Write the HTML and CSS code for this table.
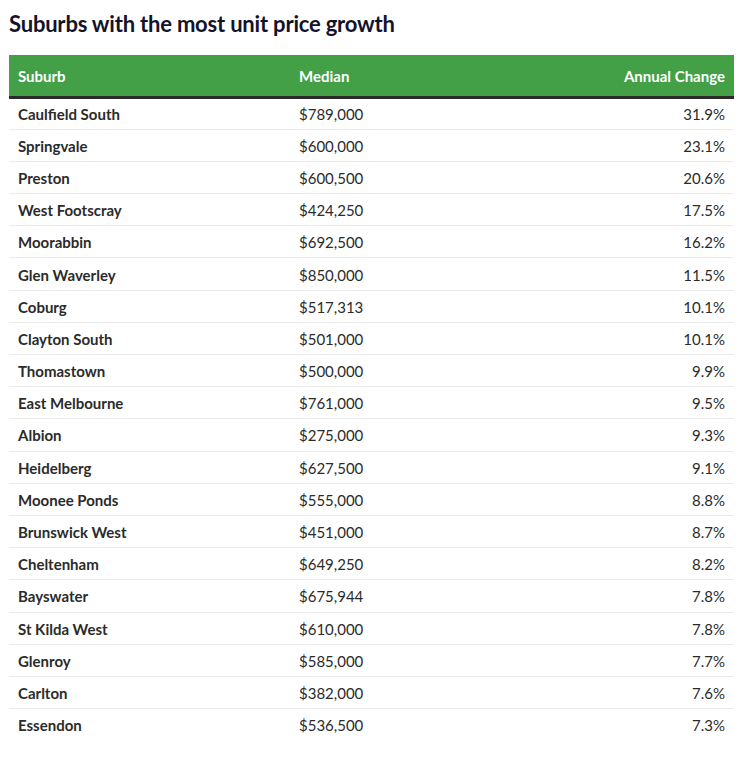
FILE: index.html
```html
<!DOCTYPE html>
<html>
<head>
<meta charset="utf-8">
<link rel="stylesheet" href="styles.css">
</head>
<body>
<h2 class="title">Suburbs with the most unit price growth</h2>
<table class="data">
<thead>
<tr><th class="c1">Suburb</th><th class="c2">Median</th><th class="c3">Annual Change</th></tr>
</thead>
<tbody>
<tr><td class="c1">Caulfield South</td><td class="c2">$789,000</td><td class="c3">31.9%</td></tr>
<tr><td class="c1">Springvale</td><td class="c2">$600,000</td><td class="c3">23.1%</td></tr>
<tr><td class="c1">Preston</td><td class="c2">$600,500</td><td class="c3">20.6%</td></tr>
<tr><td class="c1">West Footscray</td><td class="c2">$424,250</td><td class="c3">17.5%</td></tr>
<tr><td class="c1">Moorabbin</td><td class="c2">$692,500</td><td class="c3">16.2%</td></tr>
<tr><td class="c1">Glen Waverley</td><td class="c2">$850,000</td><td class="c3">11.5%</td></tr>
<tr><td class="c1">Coburg</td><td class="c2">$517,313</td><td class="c3">10.1%</td></tr>
<tr><td class="c1">Clayton South</td><td class="c2">$501,000</td><td class="c3">10.1%</td></tr>
<tr><td class="c1">Thomastown</td><td class="c2">$500,000</td><td class="c3">9.9%</td></tr>
<tr><td class="c1">East Melbourne</td><td class="c2">$761,000</td><td class="c3">9.5%</td></tr>
<tr><td class="c1">Albion</td><td class="c2">$275,000</td><td class="c3">9.3%</td></tr>
<tr><td class="c1">Heidelberg</td><td class="c2">$627,500</td><td class="c3">9.1%</td></tr>
<tr><td class="c1">Moonee Ponds</td><td class="c2">$555,000</td><td class="c3">8.8%</td></tr>
<tr><td class="c1">Brunswick West</td><td class="c2">$451,000</td><td class="c3">8.7%</td></tr>
<tr><td class="c1">Cheltenham</td><td class="c2">$649,250</td><td class="c3">8.2%</td></tr>
<tr><td class="c1">Bayswater</td><td class="c2">$675,944</td><td class="c3">7.8%</td></tr>
<tr><td class="c1">St Kilda West</td><td class="c2">$610,000</td><td class="c3">7.8%</td></tr>
<tr><td class="c1">Glenroy</td><td class="c2">$585,000</td><td class="c3">7.7%</td></tr>
<tr><td class="c1">Carlton</td><td class="c2">$382,000</td><td class="c3">7.6%</td></tr>
<tr><td class="c1">Essendon</td><td class="c2">$536,500</td><td class="c3">7.3%</td></tr>
</tbody>
</table>
</body>
</html>
```
FILE: styles.css
```css
html, body {
  margin: 0;
  padding: 0;
  background: #ffffff;
}
body {
  padding: 0 11px 0 9px;
  font-family: Lato, "Noto Sans", sans-serif;
  color: #222222;
}
.title {
  margin: 10px 0 0 0;
  height: 45px;
  font-size: 22px;
  line-height: 28px;
  font-weight: 700;
  color: #13132b;
  letter-spacing: -0.2px;
}
.data {
  width: 725px;
  border-collapse: collapse;
  font-size: 15px;
}
.data thead th {
  background: #43a047;
  color: #ffffff;
  font-weight: 700;
  height: 42px;
  padding: 2px 9px 0 9px;
  text-align: left;
  border-bottom: 3px solid #2a2a2a;
  box-sizing: border-box;
}
.data th.c3, .data td.c3 {
  text-align: right;
}
.data th.c1, .data td.c1 {
  width: 281px;
}
.data td {
  height: 32.2px;
  padding: 1px 9px 0 9px;
  box-sizing: border-box;
  border-bottom: 1px solid #ebebeb;
  color: #2b2b2b;
}
.data td.c1 {
  font-weight: 700;
}
.data tbody tr:last-child td {
  border-bottom: none;
}
```
